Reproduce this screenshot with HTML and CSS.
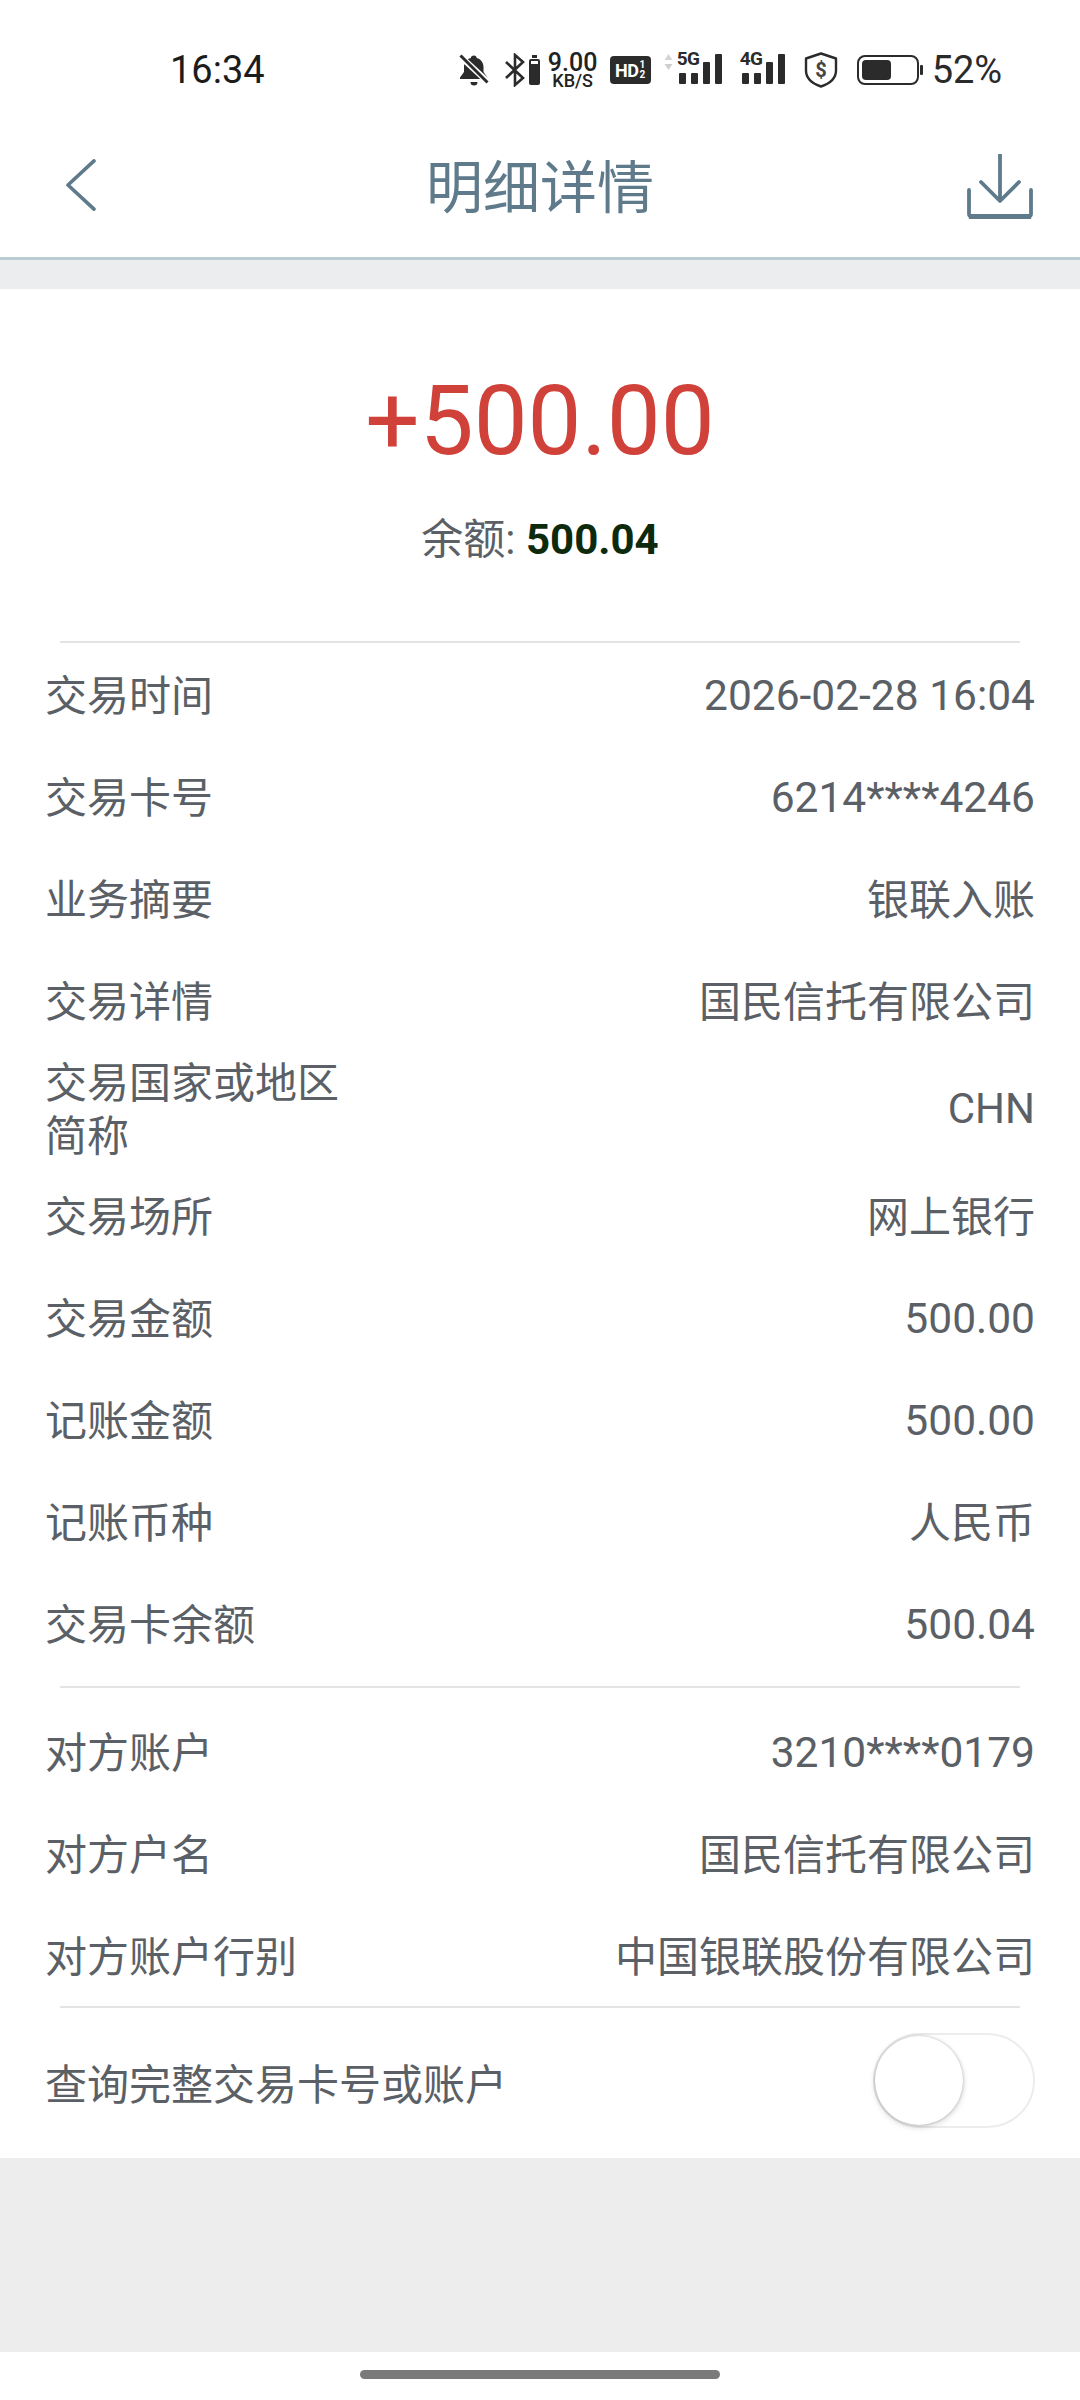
FILE: index.html
```html
<!DOCTYPE html>
<html lang="zh-CN">
<head>
<meta charset="utf-8">
<title>明细详情</title>
<link rel="stylesheet" href="styles.css">
</head>
<body>
<div class="phone">
  <div class="status">
    <span class="time">16:34</span>
    <div class="status-right">
      <svg class="ic-bell" viewBox="0 0 30 32"><path d="M15 1.500c1.600 0 2.600 1 2.700 2.400 4.400 1.200 6.800 4.800 6.800 9.100v5l4 5.500v1.500H1v-1.500l4-5.500v-5c0-4.300 2.400-7.900 6.800-9.100.1-1.400 1.100-2.400 3.200-2.400z" fill="#2b2b2b"/><path d="M11.500 28h7a3.500 3.500 0 0 1-7 0z" fill="#2b2b2b"/><path d="M2 3l27 25" stroke="#fff" stroke-width="6"/><path d="M1.500 1.500l27 27" stroke="#2b2b2b" stroke-width="3"/></svg>
      <svg class="ic-bt" viewBox="0 0 36 34"><path d="M2 9l17 16-8 7V2l8 7L2 25" fill="none" stroke="#2b2b2b" stroke-width="2.600"/><rect x="25" y="6" width="11" height="26" rx="2" fill="#2b2b2b"/><rect x="28" y="2" width="5" height="3" fill="#2b2b2b"/><rect x="27" y="8" width="7" height="3" fill="#fff"/></svg>
      <div class="speed"><span class="speed-n">9.00</span><span class="speed-u">KB/S</span></div>
      <div class="hd"><span class="hd-t">HD</span><span class="hd-f"><span>1</span><span>2</span></span></div>
      <svg class="ic-arrows" viewBox="0 0 9 16"><path d="M4.500 0l4 6h-8z" fill="#d4d4d4"/><path d="M4.500 16l-4-6h8z" fill="#cfcfcf"/></svg>
      <div class="signal sig5"><span class="net">5G</span><div class="bars"><i class="b1"></i><i class="b2"></i><i class="b3"></i><i class="b4"></i></div></div>
      <div class="signal sig4"><span class="net">4G</span><div class="bars"><i class="b1"></i><i class="b2"></i><i class="b3"></i><i class="b4"></i></div></div>
      <svg class="ic-shield" viewBox="0 0 34 36"><path d="M17 1.500l15 5v12c0 8-6 13-15 16-9-3-15-8-15-16v-12z" fill="none" stroke="#2b2b2b" stroke-width="2.400" stroke-linejoin="round"/><text class="dollar" x="17" y="25" text-anchor="middle">$</text></svg>
      <div class="battery"><div class="batt-body"><div class="batt-fill"></div></div><div class="batt-cap"></div></div>
      <span class="pct">52%</span>
    </div>
  </div>

  <header class="nav">
    <svg class="ic-back" viewBox="0 0 32 54"><path d="M30 2L3 27l27 25" fill="none" stroke="#5f7a8b" stroke-width="3.800" stroke-linecap="round" stroke-linejoin="round"/></svg>
    <h1 class="title">明细详情</h1>
    <svg class="ic-dl" viewBox="0 0 66 66"><path d="M33 1v45M14 28l19 19 19-19" fill="none" stroke="#5f7a8b" stroke-width="3.800" stroke-linecap="round" stroke-linejoin="round"/><path d="M2 36v24a3 3 0 0 0 3 3h56a3 3 0 0 0 3-3V36" fill="none" stroke="#5f7a8b" stroke-width="3.800" stroke-linecap="round"/><path d="M2 62.500h62" stroke="#5f7a8b" stroke-width="5"/></svg>
  </header>

  <main class="card">
    <section class="hero">
      <div class="amount">+500.00</div>
      <div class="balance">余额: <b class="balance-n">500.04</b></div>
    </section>
    <hr class="rule">
    <section class="group">
      <div class="row"><span class="k">交易时间</span><span class="v num">2026-02-28 16:04</span></div>
      <div class="row"><span class="k">交易卡号</span><span class="v num">6214****4246</span></div>
      <div class="row"><span class="k">业务摘要</span><span class="v">银联入账</span></div>
      <div class="row"><span class="k">交易详情</span><span class="v">国民信托有限公司</span></div>
      <div class="row row-tall"><span class="k k-wrap">交易国家或地区简称</span><span class="v code">CHN</span></div>
      <div class="row"><span class="k">交易场所</span><span class="v">网上银行</span></div>
      <div class="row"><span class="k">交易金额</span><span class="v num">500.00</span></div>
      <div class="row"><span class="k">记账金额</span><span class="v num">500.00</span></div>
      <div class="row"><span class="k">记账币种</span><span class="v">人民币</span></div>
      <div class="row"><span class="k">交易卡余额</span><span class="v num">500.04</span></div>
    </section>
    <hr class="rule rule-mid">
    <section class="group">
      <div class="row"><span class="k">对方账户</span><span class="v num">3210****0179</span></div>
      <div class="row"><span class="k">对方户名</span><span class="v">国民信托有限公司</span></div>
      <div class="row"><span class="k">对方账户行别</span><span class="v">中国银联股份有限公司</span></div>
    </section>
    <hr class="rule">
    <div class="row row-toggle">
      <span class="k">查询完整交易卡号或账户</span>
      <div class="switch"><div class="knob"></div></div>
    </div>
  </main>

  <div class="filler"></div>
  <div class="home"><div class="home-bar"></div></div>
</div>
</body>
</html>
```
FILE: styles.css
```css
* { box-sizing: border-box; }
html, body { margin: 0; padding: 0; background: #fff; }
body { font-family: Roboto, "Noto Sans CJK SC", sans-serif; }
.phone { width: 1080px; height: 2400px; display: flex; flex-direction: column; overflow: hidden; }

/* status bar */
.status { height: 130px; flex: none; display: flex; align-items: center; padding: 10px 0 0 170px; color: #222; }
.time { font-size: 38px; color: #1c1c1c; }
.status-right { margin-left: 194px; display: flex; align-items: center; }
.ic-bell { width: 30px; height: 32px; }
.ic-bt { width: 36px; height: 34px; margin-left: 15px; }
.speed { width: 50px; margin-left: 8px; display: flex; flex-direction: column; align-items: center; line-height: 1; }
.speed-n { font-size: 25px; font-weight: 500; height: 21px; line-height: 21px; white-space: nowrap; }
.speed-u { font-size: 18px; font-weight: 500; height: 16px; line-height: 16px; white-space: nowrap; }
.hd { width: 41px; height: 28px; margin-left: 12px; background: #2b2b2b; border-radius: 4px; color: #fff; display: flex; align-items: center; justify-content: center; font-weight: 700; }
.hd-t { font-size: 18px; letter-spacing: -0.5px; }
.hd-f { display: flex; flex-direction: column; font-size: 10px; line-height: 10px; margin-left: 1px; }
.ic-arrows { width: 9px; height: 16px; margin: 0 0 16px 13px; }
.signal { position: relative; width: 44px; height: 32px; }
.sig5 { margin-left: 6px; }
.sig4 { margin-left: 19px; }
.net { position: absolute; left: -2px; top: -5px; font-size: 19px; font-weight: 700; letter-spacing: -0.5px; color: #2b2b2b; line-height: 20px; background: #fff; padding-right: 1px; z-index: 1; }
.bars { height: 30px; display: flex; align-items: flex-end; gap: 5px; }
.bars i { display: block; width: 7px; background: #2b2b2b; border-radius: 1px; }
.b1 { height: 11px; } .b2 { height: 11px; } .b3 { height: 22px; } .b4 { height: 30px; }
.ic-shield { width: 34px; height: 36px; margin-left: 18px; }
.dollar { font-size: 20px; font-weight: 700; fill: #444; }
.battery { display: flex; align-items: center; margin-left: 19px; }
.batt-body { width: 62px; height: 30px; border: 2.500px solid #2b2b2b; border-radius: 8px; padding: 3px; }
.batt-fill { width: 29px; height: 100%; background: #2b2b2b; border-radius: 4px; }
.batt-cap { width: 3px; height: 10px; margin-left: 1px; background: #2b2b2b; border-radius: 1px; }
.pct { font-size: 38px; margin-left: 9px; color: #2a2a2a; }

/* nav */
.nav { height: 130px; flex: none; display: grid; grid-template-columns: 1fr auto 1fr; align-items: center; padding: 0 47px 12px; border-bottom: 3px solid #b9ccd1; }
.ic-back { width: 31px; height: 52px; margin: 0 0 6px 18px; }
.title { margin: 0 0 8px; font-size: 57px; font-weight: 400; color: #5f7a8b; font-family: "Noto Sans CJK SC", sans-serif; line-height: 1; }
.ic-dl { width: 66px; height: 66px; justify-self: end; margin-bottom: 2px; }

/* card */
.card { flex: none; margin-top: 29px; background: #fff; box-shadow: 0 -29px 0 #ecedee; }
.hero { height: 352px; display: flex; flex-direction: column; align-items: center; padding-top: 71px; }
.amount { font-size: 96px; line-height: 122px; color: #d0413a; }
.balance { font-size: 42px; line-height: 56px; margin-top: 30px; color: #5a6066; }
.balance-n { font-weight: 700; color: #0e2a0c; }
.rule { margin: 0 60px; height: 2px; border: 0; background: #e4e4e4; }
.rule-mid { margin-top: 12px; margin-bottom: 12px; }
.row { height: 102px; display: flex; align-items: center; justify-content: space-between; padding: 2px 45px 0; font-size: 42px; color: #5a6066; }
.row-tall { height: 113px; }
.k { line-height: 53px; padding-top: 2px; }
.k-wrap { width: 320px; }
.v { text-align: right; line-height: 53px; padding-top: 2px; }
.num { font-size: 42.500px; padding-top: 0; }
.code { padding-top: 0; }
.row-toggle { height: 150px; }
.switch { width: 162px; height: 95px; margin-bottom: 7px; border: 2px solid #ececec; border-radius: 48px; background: #fff; position: relative; }
.knob { position: absolute; left: 0; top: 1px; width: 88px; height: 89px; border-radius: 50%; background: #fff; box-shadow: 0 2px 6px rgba(0,0,0,.18), 0 0 3px rgba(0,0,0,.22); }

/* bottom */
.filler { flex: 1; background: #ededed; }
.home { height: 48px; flex: none; padding-top: 18px; display: flex; justify-content: center; background: #fff; }
.home-bar { width: 360px; height: 9px; border-radius: 5px; background: #7a7a7a; }
```
